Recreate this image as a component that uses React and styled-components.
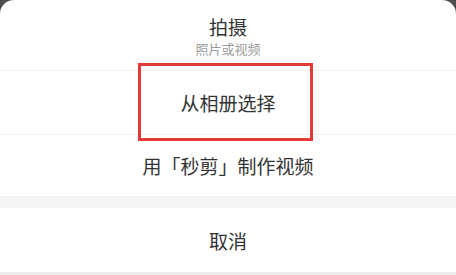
import React from 'react';
import styled, { createGlobalStyle } from 'styled-components';

const GlobalStyle = createGlobalStyle`
  html, body {
    margin: 0;
    padding: 0;
    background: #4d4d4d;
  }
  body {
    font-family: "Noto Sans CJK SC", "Noto Sans", sans-serif;
  }
`;

const Sheet = styled.div`
  width: 456px;
  height: 275px;
  background: #fff;
  border-radius: 14px 14px 0 0;
  overflow: hidden;
  display: flex;
  flex-direction: column;
`;

const Header = styled.div`
  height: 71px;
  display: flex;
  flex-direction: column;
  align-items: center;
  justify-content: center;
  border-bottom: 1px solid #f0f0f0;
  padding-top: 3px;
  box-sizing: border-box;
`;

const Title = styled.div`
  font-size: 19px;
  line-height: 22px;
  color: #333;
`;

const Subtitle = styled.div`
  font-size: 13px;
  line-height: 18px;
  color: #9a9a9a;
  margin-top: 2px;
`;

const Option = styled.div`
  position: relative;
  height: ${({ h }) => h}px;
  display: flex;
  align-items: center;
  justify-content: center;
  font-size: 19px;
  color: #333;
  border-bottom: ${({ last }) => (last ? 'none' : '1px solid #f0f0f0')};
  box-sizing: border-box;
`;

const Highlight = styled.div`
  position: absolute;
  left: 138px;
  top: -8px;
  width: 175px;
  height: 78px;
  border: 3px solid #e53a3a;
  box-sizing: border-box;
  pointer-events: none;
`;

const Gap = styled.div`
  height: 11px;
  background: #f5f5f5;
`;

const Bottom = styled.div`
  height: 3px;
  background: #ececec;
`;

export default function App() {
  return (
    <>
      <GlobalStyle />
      <Sheet>
        <Header>
          <Title>拍摄</Title>
          <Subtitle>照片或视频</Subtitle>
        </Header>
        <Option h={64}>
          从相册选择
          <Highlight />
        </Option>
        <Option h={62}>用「秒剪」制作视频</Option>
        <Gap />
        <Option h={64} last>取消</Option>
        <Bottom />
      </Sheet>
    </>
  );
}
